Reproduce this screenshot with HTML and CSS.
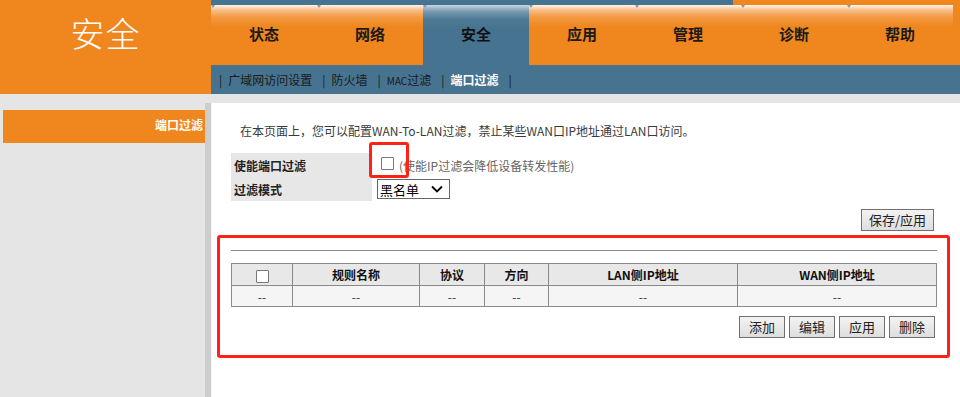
FILE: index.html
```html
<!DOCTYPE html>
<html lang="zh">
<head>
<meta charset="utf-8">
<title>安全 - 端口过滤</title>
<link rel="stylesheet" href="styles.css">
</head>
<body>
<div class="header">
  <div class="logo">安全</div>
  <div class="nav">
    <div class="topstrip"><span class="ts-blue"></span><span class="ts-orange"></span></div>
    <div class="tabs">
      <div class="tab">状态</div>
      <div class="tab">网络</div>
      <div class="tab active">安全</div>
      <div class="tab">应用</div>
      <div class="tab">管理</div>
      <div class="tab">诊断</div>
      <div class="tab">帮助</div>
    </div>
    <div class="subnav">
      <span class="sep">|</span><span class="sub">广域网访问设置</span>
      <span class="sep">|</span><span class="sub">防火墙</span>
      <span class="sep">|</span><span class="sub"><span class="mac">MAC</span>过滤</span>
      <span class="sep">|</span><span class="sub current">端口过滤</span>
      <span class="sep">|</span>
    </div>
  </div>
</div>
<div class="main">
  <div class="sidebar">
    <div class="side-item">端口过滤</div>
  </div>
  <div class="panel">
    <p class="intro">在本页面上，您可以配置WAN-To-LAN过滤，禁止某些WAN口IP地址通过LAN口访问。</p>
    <div class="form">
      <div class="label">使能端口过滤</div>
      <div class="field check-field"><span class="checkbox"></span><span class="hint">(使能IP过滤会降低设备转发性能)</span></div>
      <div class="label">过滤模式</div>
      <div class="field select-field">
        <div class="select"><span>黑名单</span>
          <svg class="chev" width="12" height="8" viewBox="0 0 12 8"><path d="M1 1.5 L6 6.5 L11 1.5" fill="none" stroke="#000" stroke-width="1.8"/></svg>
        </div>
      </div>
    </div>
    <div class="save-row"><button class="btn">保存/应用</button></div>
    <div class="rule"></div>
    <table class="list">
      <colgroup><col style="width:61px"><col style="width:127px"><col style="width:65px"><col style="width:64px"><col style="width:189px"><col></colgroup>
      <tr class="head"><th><span class="checkbox"></span></th><th>规则名称</th><th>协议</th><th>方向</th><th>LAN侧IP地址</th><th>WAN侧IP地址</th></tr>
      <tr class="row"><td>--</td><td>--</td><td>--</td><td>--</td><td>--</td><td>--</td></tr>
    </table>
    <div class="actions">
      <button class="btn small">添加</button>
      <button class="btn small">编辑</button>
      <button class="btn small">应用</button>
      <button class="btn small">删除</button>
    </div>
    <div class="mark mark-check"></div>
    <div class="mark mark-table"></div>
  </div>
</div>
</body>
</html>
```
FILE: styles.css
```css
* { box-sizing: border-box; }
html, body { margin: 0; padding: 0; }
body {
  width: 960px;
  height: 397px;
  overflow: hidden;
  font-family: "Noto Sans CJK SC", "Liberation Sans", sans-serif;
  font-size: 12px;
  color: #222;
  background: #e5e5e5;
}
.header { display: flex; height: 94px; }
.logo {
  width: 211px;
  background: #ef861e;
  color: #fff;
  font-size: 34px;
  font-weight: 300;
  line-height: 1;
  display: flex;
  justify-content: center;
  padding-top: 16px;
  letter-spacing: 1px;
}
.nav { flex: 1; display: flex; flex-direction: column; background: #ef861e; }
.topstrip { height: 5px; display: flex; }
.ts-blue { width: 522px; background: #46738f; }
.ts-orange { flex: 1; background: #ef861e; }
.tabs { height: 60px; display: flex; }
.tab {
  position: relative;
  width: 106px;
  display: flex;
  align-items: center;
  justify-content: center;
  font-size: 15px;
  font-weight: bold;
  color: #1a1a1a;
  padding-bottom: 3px;
  background: linear-gradient(#fff4ea 0, #f8c08a 5px, #f29a42 12px, #ef861e 22px);
}
.tab::before {
  content: "";
  position: absolute;
  left: 0;
  top: 0;
  width: 0;
  height: 0;
  border-left: 2px solid transparent;
  border-right: 2px solid transparent;
  border-top: 3px solid #7d9db4;
}
.tab.active {
  background: linear-gradient(#c9d7e1 0, #7d9db4 6px, #4f7a95 14px, #46738f 24px);
  color: #111;
}
.subnav {
  height: 29px;
  background: #46738f;
  display: flex;
  align-items: center;
  padding-left: 8px;
  font-size: 12px;
  color: #1a1a1a;
}
.sep { margin: 0 6px 0 0; color: #1a1a1a; }
.sub { margin-right: 10px; }
.mac { font-size: 10px; }
.sub.current { color: #fff; font-weight: bold; }
.main { display: flex; height: 303px; }
.sidebar { width: 205px; padding-top: 16px; }
.side-item {
  margin-left: 3px;
  height: 33px;
  background: #ef861e;
  color: #fff;
  font-weight: bold;
  text-align: right;
  padding: 6px 2px 0 0;
}
.panel {
  position: relative;
  flex: 1;
  margin-top: 9px;
  background: #fff;
  border-left: 6px solid #cdcdcd;
  box-shadow: inset 1px 0 0 #f4f4f4;
  padding: 20px 23px 0 20px;
}
.intro { margin: 0 0 14px 9px; line-height: 16px; color: #3a3a3a; }
.form {
  display: grid;
  grid-template-columns: 141px 1fr;
  grid-auto-rows: 24px;
}
.label {
  background: #e7e7e7;
  font-weight: bold;
  display: flex;
  align-items: center;
  padding-left: 3px;
  font-size: 12px;
}
.field { display: flex; align-items: center; }
.check-field { padding-left: 9px; }
.checkbox {
  display: inline-block;
  width: 13px;
  height: 13px;
  border: 1px solid #777;
  background: #fff;
  border-radius: 1px;
}
.check-field .checkbox { margin-top: -3px; }
.hint { color: #666; margin-left: 5px; }
.select-field { padding-left: 5px; }
.select {
  width: 73px;
  height: 20px;
  border: 1px solid #666;
  display: flex;
  align-items: center;
  justify-content: space-between;
  padding: 0 6px 0 2px;
  font-size: 13px;
  color: #000;
}
.save-row { display: flex; justify-content: flex-end; margin-top: 8px; padding-right: 3px; }
.btn {
  font-family: "Noto Sans CJK SC", "Liberation Sans", sans-serif;
  font-size: 13px;
  color: #222;
  height: 22px;
  padding: 0 7px;
  border: 1px solid #707070;
  background: linear-gradient(#f3f3f3, #dedede);
  line-height: 18px;
}
.rule { height: 1px; background: #8a8a8a; margin-top: 19px; }
.list {
  margin-top: 12px;
  width: 706px;
  border-collapse: collapse;
  table-layout: fixed;
}
.list th, .list td {
  border: 1px solid #8a8a8a;
  text-align: center;
  padding: 0;
}
.list th { height: 22px; background: #e8e8e8; font-weight: bold; font-size: 12px; color: #111; }
.list th .checkbox { vertical-align: middle; width: 13px; height: 13px; }
.list td { height: 21px; background: #f5f5f5; color: #333; }
.actions { display: flex; justify-content: flex-end; gap: 4px; margin-top: 9px; padding-right: 2px; }
.btn.small { width: 46px; padding: 0; }
.mark {
  position: absolute;
  border: 3px solid #ff2215;
  border-radius: 3px;
}
.mark-check { left: 158px; top: 39px; width: 40px; height: 36px; }
.mark-table { left: 6px; top: 132px; width: 733px; height: 123px; }
```
